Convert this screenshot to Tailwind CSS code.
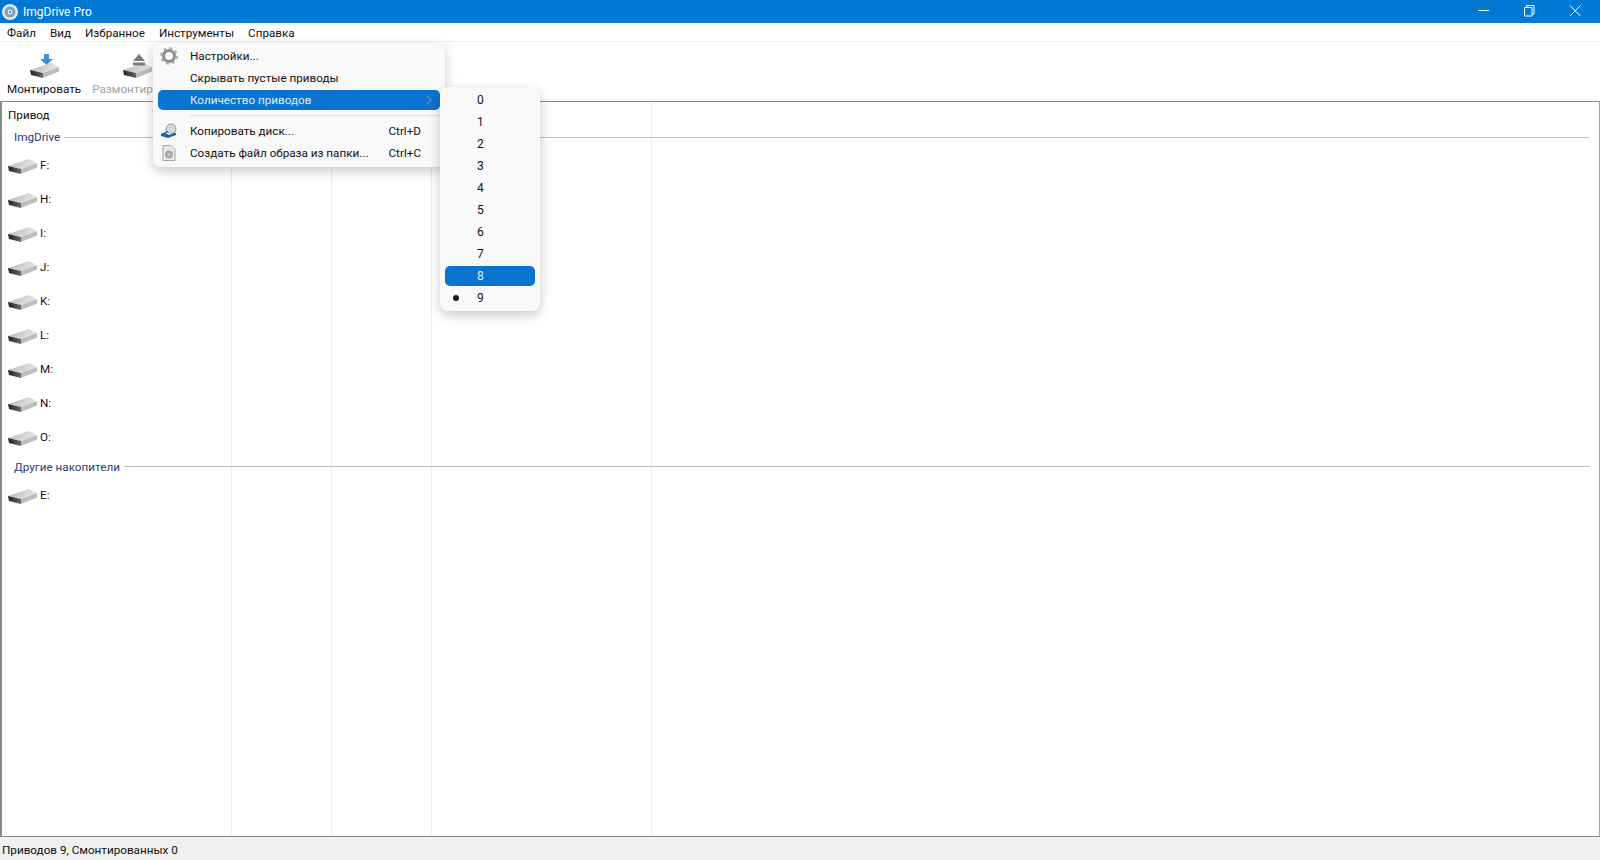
<!DOCTYPE html>
<html lang="ru">
<head>
<meta charset="utf-8">
<script src="https://cdn.jsdelivr.net/npm/@tailwindcss/browser@4"></script>
<title>ImgDrive Pro</title>
</head>
<body class="bg-white overflow-hidden">
<svg width="0" height="0" class="absolute">
  <defs>
    <linearGradient id="top" x1="0" y1="0" x2="1" y2="0.3"><stop offset="0" stop-color="#b4b4b4"/><stop offset="1" stop-color="#e6e6e6"/></linearGradient>
    <linearGradient id="slot" x1="0" y1="0" x2="1" y2="0"><stop offset="0" stop-color="#1f1f1f"/><stop offset="1" stop-color="#6a6a6a"/></linearGradient>
    <symbol id="drive" viewBox="0 0 29 15">
      <path d="M0 7 L21 0 L29 4 L13 10 Z" fill="url(#top)"/>
      <path d="M0 7 L13 10 L13 15 L1 12 Z" fill="url(#slot)"/>
      <path d="M13 10 L29 4 L29 8.500 L13 15 Z" fill="#bdbdbd"/>
    </symbol>
  </defs>
</svg>
<div class="relative w-[1600px] h-[860px] flex flex-col text-[11.700px] text-[#111] font-['Roboto','Noto_Sans',sans-serif]">
  <!-- title -->
  <div class="h-[23px] bg-[#0078d4] flex items-center text-white shrink-0">
    <svg width="18" height="18" viewBox="0 0 18 18" class="ml-[1px]"><circle cx="9" cy="9" r="8" fill="#e3e8ee"/><circle cx="9" cy="9" r="5.500" fill="#8aa0b8"/><circle cx="9" cy="9" r="2.200" fill="#eef2f6"/><circle cx="9" cy="9" r="1" fill="#0078d4"/></svg>
    <span class="ml-[4px] text-[12px] mt-[1px]">ImgDrive Pro</span>
    <div class="ml-auto flex h-full items-center">
      <svg width="46" height="23" viewBox="0 0 46 23"><path d="M18 10.500h11" stroke="#fff" fill="none"/></svg>
      <svg width="46" height="23" viewBox="0 0 46 23"><path d="M18.500 7.500h7.500v8.500h-7.500zM20.500 7.500v-2h7.500v8.500h-2" stroke="#fff" fill="none"/></svg>
      <svg width="46" height="23" viewBox="0 0 46 23" class="mr-[2px]"><path d="M18 5.500l10.500 10.500M28.500 5.500l-10.500 10.500" stroke="#fff" fill="none"/></svg>
    </div>
  </div>
  <!-- menubar -->
  <div class="h-[19px] flex items-center border-b border-[#f0f0f0] pl-[7px] pt-[3px] gap-[14px] shrink-0">
    <span>Файл</span><span>Вид</span><span>Избранное</span><span>Инструменты</span><span>Справка</span>
  </div>
  <!-- toolbar -->
  <div class="h-[59px] flex items-start shrink-0 pl-[7px] pt-[10px]">
    <div class="flex flex-col items-center">
      <svg width="30" height="26" viewBox="0 0 30 26" class="ml-[1px]"><use href="#drive" x="0" y="11" width="29" height="15"/><path d="M14 2h5v5h4l-6.500 6 -6.500 -6h4z" fill="#3f8fdc"/></svg>
      <span class="mt-[3px] leading-[17px]">Монтировать</span>
    </div>
    <div class="flex flex-col items-center ml-[11px] text-[#a0a0a0]">
      <svg width="30" height="26" viewBox="0 0 30 26"><use href="#drive" x="0" y="11" width="29" height="15"/><path d="M16 2l6 7h-12zM10 10.500h12v3h-12z" fill="#7a7a7a"/></svg>
      <span class="mt-[3px] leading-[17px]">Размонтировать</span>
    </div>
  </div>
  <!-- list -->
  <div class="relative flex-1 border-t border-l-2 border-r border-b border-t-[#8a8a8a] border-l-[#8a8a8a] border-r-[#a0a0a0] border-b-[#8a8a8a] min-h-0">
    <div class="absolute inset-0 flex pointer-events-none">
      <div class="w-[230px] border-r border-[#eceff3]"></div>
      <div class="w-[100px] border-r border-[#eceff3]"></div>
      <div class="w-[100px] border-r border-[#eceff3]"></div>
      <div class="w-[220px] border-r border-[#eceff3]"></div>
    </div>
    <div class="relative flex flex-col">
      <div class="h-[23px] pl-[6px] pt-[2px] flex items-center mt-[1px]">Привод</div>
      <div class="h-[22px] flex items-center pl-[12px] pr-[10px] text-[#2a3a7a]"><span class="mt-[2px]">ImgDrive</span><div class="flex-1 h-px bg-[#b4bcc6] ml-[4px]"></div></div>
      <div class="flex flex-col mt-[1px]">
        <div class="h-[34px] flex items-center pl-[6px] gap-[3px]"><svg width="29" height="15"><use href="#drive" width="29" height="15"/></svg><span>F:</span></div>
        <div class="h-[34px] flex items-center pl-[6px] gap-[3px]"><svg width="29" height="15"><use href="#drive" width="29" height="15"/></svg><span>H:</span></div>
        <div class="h-[34px] flex items-center pl-[6px] gap-[3px]"><svg width="29" height="15"><use href="#drive" width="29" height="15"/></svg><span>I:</span></div>
        <div class="h-[34px] flex items-center pl-[6px] gap-[3px]"><svg width="29" height="15"><use href="#drive" width="29" height="15"/></svg><span>J:</span></div>
        <div class="h-[34px] flex items-center pl-[6px] gap-[3px]"><svg width="29" height="15"><use href="#drive" width="29" height="15"/></svg><span>K:</span></div>
        <div class="h-[34px] flex items-center pl-[6px] gap-[3px]"><svg width="29" height="15"><use href="#drive" width="29" height="15"/></svg><span>L:</span></div>
        <div class="h-[34px] flex items-center pl-[6px] gap-[3px]"><svg width="29" height="15"><use href="#drive" width="29" height="15"/></svg><span>M:</span></div>
        <div class="h-[34px] flex items-center pl-[6px] gap-[3px]"><svg width="29" height="15"><use href="#drive" width="29" height="15"/></svg><span>N:</span></div>
        <div class="h-[34px] flex items-center pl-[6px] gap-[3px]"><svg width="29" height="15"><use href="#drive" width="29" height="15"/></svg><span>O:</span></div>
      </div>
      <div class="h-[22px] flex items-center pl-[12px] pr-[10px] text-[#2a3a7a]"><span class="mt-[3px]">Другие накопители</span><div class="flex-1 h-px bg-[#b4bcc6] ml-[4px]"></div></div>
      <div class="h-[34px] mt-[2px] flex items-center pl-[6px] gap-[3px]"><svg width="29" height="15"><use href="#drive" width="29" height="15"/></svg><span>E:</span></div>
    </div>
  </div>
  <!-- status -->
  <div class="h-[23px] bg-[#f0f0f0] flex items-center pl-[2px] pt-[4px] shrink-0">Приводов 9, Смонтированных 0</div>

  <!-- tools menu -->
  <div class="absolute left-[153px] top-[43px] w-[292px] h-[124px] bg-[#f9f9f9] rounded-lg shadow-[0_4px_12px_rgba(0,0,0,0.22)] px-[5px] pt-[2px] flex flex-col">
    <div class="h-[22px] flex items-center pl-[32px]">
      <svg width="18" height="18" viewBox="0 0 18 18" class="absolute left-[7px] top-[4px]"><circle cx="9" cy="9" r="5.500" fill="none" stroke="#8d8d8d" stroke-width="3"/><circle cx="9" cy="9" r="7.500" fill="none" stroke="#a8a8a8" stroke-width="2.500" stroke-dasharray="2.800 3.100"/></svg>
      <span class="mt-[2px]">Настройки...</span>
    </div>
    <div class="h-[22px] flex items-center pl-[32px]"><span class="mt-[2px]">Скрывать пустые приводы</span></div>
    <div class="h-[20px] my-[1px] flex items-center pl-[32px] pr-[8px] bg-[#0a74d0] rounded-[5px] text-[#dff1ff] justify-between">
      <span class="mt-[2px]">Количество приводов</span>
      <svg width="6" height="10" viewBox="0 0 6 10"><path d="M1 1l4 4 -4 4" fill="none" stroke="#5a8fbe" stroke-width="1.200"/></svg>
    </div>
    <div class="h-[9px] flex items-center pl-[32px]"><div class="w-full h-px bg-[#dcdcdc]"></div></div>
    <div class="h-[22px] flex items-center pl-[32px] pr-[19px] justify-between">
      <svg width="18" height="16" viewBox="0 0 18 16" class="absolute left-[7px]"><circle cx="11" cy="6" r="5" fill="#d5dbe0" stroke="#8a949c"/><circle cx="11" cy="6" r="1.500" fill="#fff" stroke="#8a949c" stroke-width=".5"/><path d="M1 11l6-3 2 1 7 1v2l-8 3 -7-2z" fill="#2f5f8f"/><path d="M5 10l5-1 4 1 -5 2z" fill="#cfe0ee"/></svg>
      <span class="mt-[2px]">Копировать диск...</span><span class="mt-[2px]">Ctrl+D</span>
    </div>
    <div class="h-[22px] flex items-center pl-[32px] pr-[19px] justify-between">
      <svg width="14" height="16" viewBox="0 0 14 16" class="absolute left-[9px]"><path d="M1 .5h8l4 4v11h-12z" fill="#eaeaea" stroke="#a5a5a5"/><circle cx="7" cy="9.500" r="4" fill="#a8a8a8"/><circle cx="7" cy="9.500" r="1" fill="#eee"/></svg>
      <span class="mt-[2px]">Создать файл образа из папки...</span><span class="mt-[2px]">Ctrl+C</span>
    </div>
  </div>

  <!-- submenu -->
  <div class="absolute left-[440px] top-[87px] w-[100px] h-[224px] bg-[#f9f9f9] rounded-lg shadow-[0_4px_12px_rgba(0,0,0,0.22)] px-[5px] pt-[2px] flex flex-col text-[12px]">
    <div class="h-[22px] flex items-center pl-[32px]">0</div>
    <div class="h-[22px] flex items-center pl-[32px]">1</div>
    <div class="h-[22px] flex items-center pl-[32px]">2</div>
    <div class="h-[22px] flex items-center pl-[32px]">3</div>
    <div class="h-[22px] flex items-center pl-[32px]">4</div>
    <div class="h-[22px] flex items-center pl-[32px]">5</div>
    <div class="h-[22px] flex items-center pl-[32px]">6</div>
    <div class="h-[22px] flex items-center pl-[32px]">7</div>
    <div class="h-[20px] my-[1px] flex items-center pl-[32px] bg-[#0a74d0] rounded-[5px] text-[#dff1ff]">8</div>
    <div class="h-[22px] flex items-center pl-[8px]"><span class="w-[6px] h-[6px] rounded-full bg-[#1a1a1a] mr-[18px]"></span>9</div>
  </div>
</div>
</body>
</html>
